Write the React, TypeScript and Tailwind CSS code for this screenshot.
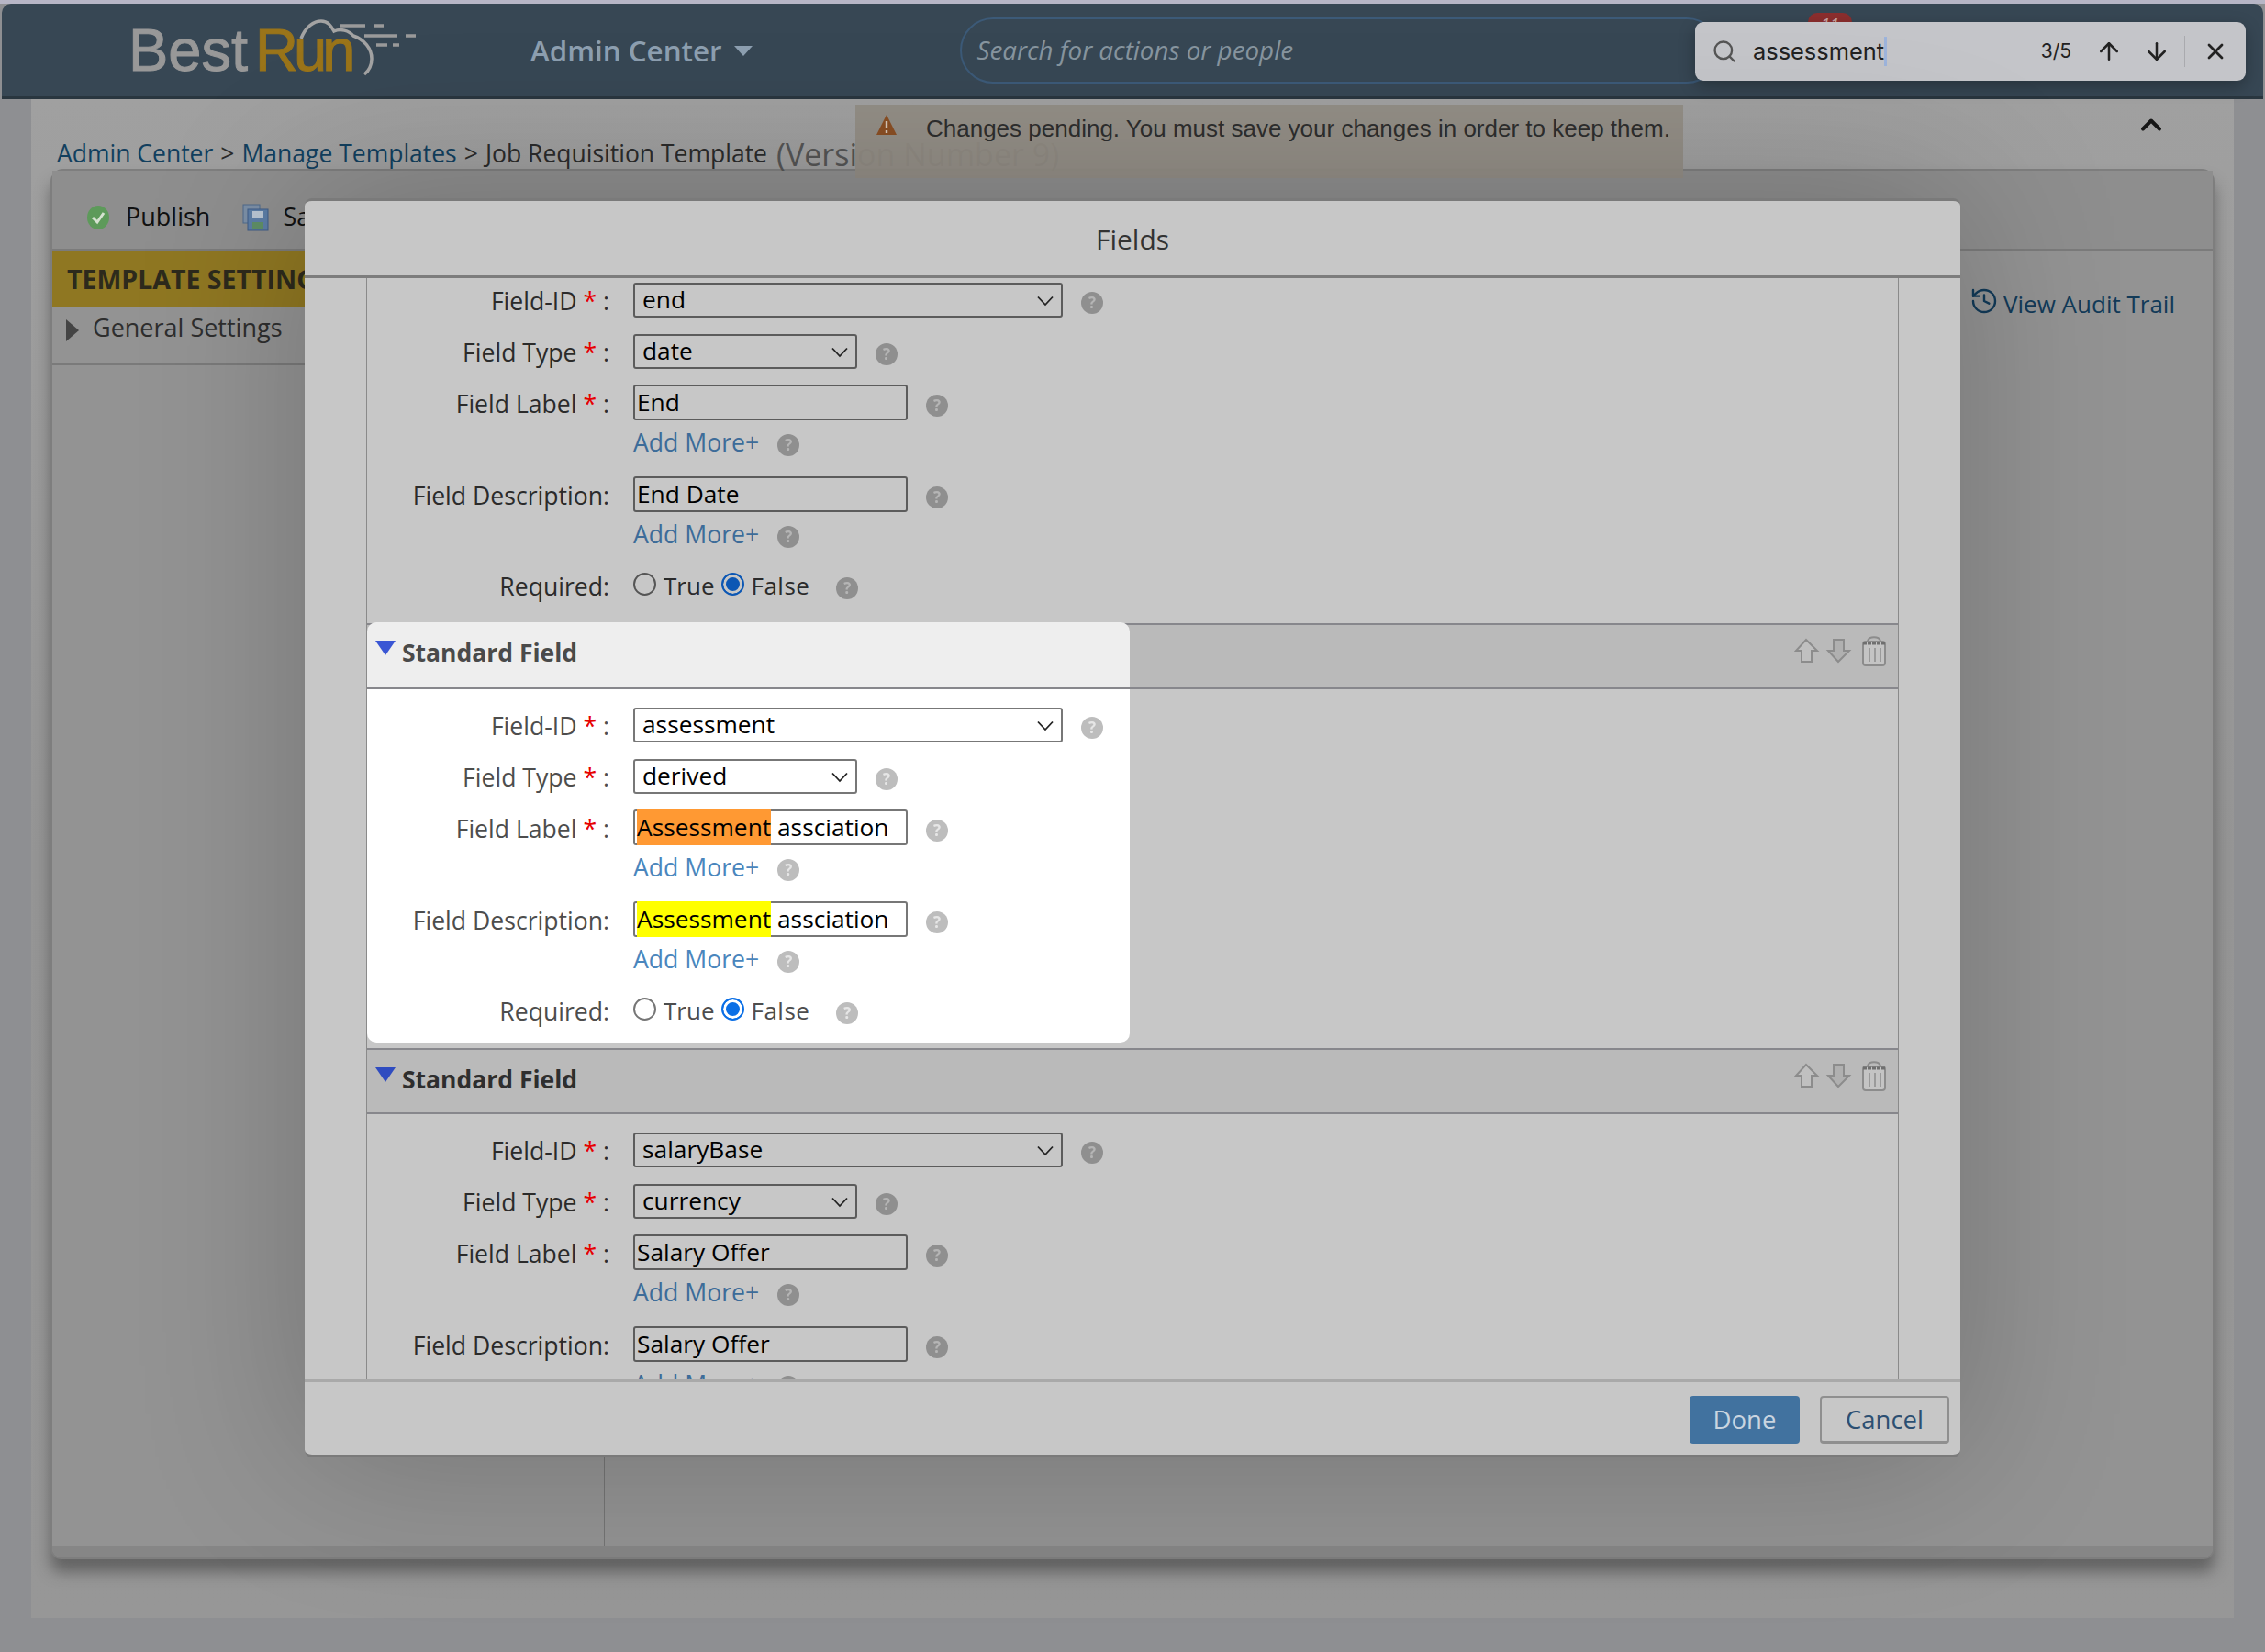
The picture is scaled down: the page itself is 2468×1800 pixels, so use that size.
import type { ReactNode } from 'react';
import { ArrowDown, ArrowUp, ChevronUp, History, Search, X } from 'lucide-react';

type FieldData = {
  id: string;
  idValue: string;
  type: string;
  label: string;
  description: string;
  active?: boolean;
};

const fields: FieldData[] = [
  { id: 'f1', idValue: 'end', type: 'date', label: 'End', description: 'End Date' },
  { id: 'f2', idValue: 'assessment', type: 'derived', label: 'assciation', description: 'assciation', active: true },
  { id: 'f3', idValue: 'salaryBase', type: 'currency', label: 'Salary Offer', description: 'Salary Offer' },
];

function Help({ active, className }: { active?: boolean; className: string }) {
  return (
    <span
      className={`flex h-[24px] w-[24px] shrink-0 translate-y-[3px] items-center justify-center rounded-full text-[17px] font-bold blur-[0.4px] ${
        active ? 'bg-[#bdbdbd] text-[#e6e6e6]' : 'bg-[#8f8f8f] text-[#b5b5b5]'
      } ${className}`}
    >
      ?
    </span>
  );
}

function Label({ text, required, active }: { text: string; required?: boolean; active?: boolean }) {
  return (
    <div className={`w-[264px] shrink-0 translate-y-[2px] text-right text-[26.6px] ${active ? 'text-[#4d4d4d]' : 'text-[#2b2b2b]'}`}>
      {text}
      {required ? (
        <>
          {' '}
          <span className="text-[#e60000]">*</span> :
        </>
      ) : (
        ':'
      )}
    </div>
  );
}

function SelectBox({ value, width, active }: { value: string; width: string; active?: boolean }) {
  return (
    <div
      className={`relative ml-[26px] flex h-[38px] items-center rounded-[3px] border-2 pl-[8px] text-[26.3px] text-black ${width} ${
        active ? 'border-[#777777] bg-white' : 'border-[#5c5c5c]'
      }`}
    >
      {value}
      <svg className="absolute right-[8px] top-[12px]" width="18" height="12" viewBox="0 0 18 12" fill="none">
        <path d="M1 1.5 L9 10 L17 1.5" stroke="#222" strokeWidth="1.8" />
      </svg>
    </div>
  );
}

function TextBox({ active, children }: { active?: boolean; children: ReactNode }) {
  return (
    <div
      className={`ml-[26px] flex h-[39px] w-[299px] items-center rounded-[3px] border-2 pl-[2px] text-[26.3px] whitespace-nowrap text-black ${
        active ? 'border-[#777777] bg-white' : 'border-[#5c5c5c]'
      }`}
    >
      {children}
    </div>
  );
}

function AddMore({ active, className }: { active?: boolean; className: string }) {
  return (
    <div className={`flex h-[30px] items-center pl-[290px] ${className}`}>
      <span className={`translate-y-[1px] text-[26.6px] ${active ? 'text-[#4a86bd]' : 'text-[#3d6c99]'}`}>Add More+</span>
      <Help active={active} className="ml-[20px]" />
    </div>
  );
}

function Radio({ name, checked, active }: { name: string; checked?: boolean; active?: boolean }) {
  return (
    <input
      type="radio"
      name={name}
      defaultChecked={checked}
      className={`m-0 h-[25px] w-[25px] -translate-y-[2px] appearance-none rounded-full border-2 ${
        active
          ? 'border-[#767676] checked:border-[#0b6fe6] checked:bg-[#0b6fe6] checked:shadow-[inset_0_0_0_3px_#ffffff]'
          : 'border-[#555555] checked:border-[#0c57b4] checked:bg-[#0c57b4] checked:shadow-[inset_0_0_0_3px_#c7c7c7]'
      }`}
    />
  );
}

function FieldFields({ field }: { field: FieldData }) {
  const { active } = field;
  const highlighted = (color: string) =>
    active ? (
      <>
        <span className={color}>Assessment</span>&nbsp;{field.label}
      </>
    ) : null;

  return (
    <div className="pt-[20px]">
      <div className="flex h-[38px] items-center">
        <Label text="Field-ID" required active={active} />
        <SelectBox value={field.idValue} width="w-[468px]" active={active} />
        <Help active={active} className="ml-[20px]" />
      </div>
      <div className="mt-[18px] flex h-[38px] items-center">
        <Label text="Field Type" required active={active} />
        <SelectBox value={field.type} width="w-[244px]" active={active} />
        <Help active={active} className="ml-[20px]" />
      </div>
      <div className="mt-[17px] flex h-[39px] items-center">
        <Label text="Field Label" required active={active} />
        <TextBox active={active}>{highlighted('bg-[#ff9933]') ?? field.label}</TextBox>
        <Help active={active} className="ml-[20px]" />
      </div>
      <AddMore active={active} className="mt-[9px]" />
      <div className="mt-[22px] flex h-[39px] items-center">
        <Label text="Field Description" active={active} />
        <TextBox active={active}>{highlighted('bg-[#ffff00]') ?? field.description}</TextBox>
        <Help active={active} className="ml-[20px]" />
      </div>
      <AddMore active={active} className="mt-[9px]" />
      <div className="mt-[28px] flex h-[26px] items-center">
        <Label text="Required" active={active} />
        <div className={`ml-[26px] flex items-center text-[26px] ${active ? 'text-[#4d4d4d]' : 'text-[#2b2b2b]'}`}>
          <Radio name={field.id} active={active} />
          <span className="ml-[8px]">True</span>
          <span className="ml-[7px] flex">
            <Radio name={field.id} checked active={active} />
          </span>
          <span className="ml-[8px] tracking-[0.5px]">False</span>
        </div>
        <Help active={active} className="ml-[29px]" />
      </div>
    </div>
  );
}

function SectionTitle({ active }: { active?: boolean }) {
  return (
    <div className="flex items-center pb-[3px] pl-[8px]">
      <svg className="-translate-y-[6px]" width="24" height="16" viewBox="0 0 24 16">
        <path d="M1 0 H23 L12 16 Z" fill={active ? '#3a56d4' : '#2f4cc0'} />
      </svg>
      <span className={`ml-[6px] text-[26.5px] font-bold ${active ? 'text-[#4a4a4a]' : 'text-[#2e2e2e]'}`}>
        Standard Field
      </span>
    </div>
  );
}

function RowTools() {
  return (
    <svg className="mr-[11px] -translate-y-[6px]" width="102" height="34" viewBox="0 0 102 34" fill="none">
      <path d="M13 5 L25 17 H19 V29 H8 V17 H2 Z" fill="#c0c0c0" stroke="#8c8c8c" strokeWidth="2" />
      <path d="M43 5 H54 V17 H60 L48 29 L37 17 H43 Z" fill="#b0b0b0" stroke="#8c8c8c" strokeWidth="2" />
      <path d="M80 6 C82 1 92 1 94 6" stroke="#8c8c8c" strokeWidth="2" />
      <rect x="75" y="7" width="24" height="26" rx="3" fill="#c4c4c4" stroke="#8c8c8c" strokeWidth="2" />
      <path d="M75 9 H99" stroke="#6f6f6f" strokeWidth="3" strokeDasharray="4 1" />
      <path d="M82 14 V29 M88 14 V29 M94 14 V29" stroke="#9a9a9a" strokeWidth="2" />
    </svg>
  );
}

function FieldSection({ field }: { field: FieldData }) {
  const { active } = field;
  return (
    <section className="border-t-2 border-[#87878c]">
      {active ? (
        <>
          <div className="flex h-[70px] border-b-2 border-[#87878c] bg-[#bababa]">
            <div className="-mt-[3px] flex h-[71px] w-[831px] rounded-t-[10px] bg-[#eeeeee]">
              <SectionTitle active />
            </div>
            <div className="ml-auto flex items-center">
              <RowTools />
            </div>
          </div>
          <div className="h-[391px]">
            <div className="h-[385px] w-[831px] rounded-b-[10px] bg-white">
              <FieldFields field={field} />
            </div>
          </div>
        </>
      ) : (
        <>
          <div className="flex h-[70px] items-center justify-between border-b-2 border-[#87878c] bg-[#bababa]">
            <SectionTitle />
            <RowTools />
          </div>
          <div className="h-[391px]">
            <FieldFields field={field} />
          </div>
        </>
      )}
    </section>
  );
}

function Modal() {
  return (
    <div className="absolute left-[332px] top-[216px] flex h-[1372px] w-[1804px] flex-col rounded-[8px] border-t-[3px] border-b-[3px] border-[#7a7a7a] bg-[#c7c7c7] shadow-[0_0_180px_rgba(0,0,0,0.22)]">
      <div className="flex h-[84px] shrink-0 items-center justify-center border-b-[3px] border-[#7d7d7d] pt-[1px] text-[30px] text-[#333333]">
        Fields
      </div>
      <div className="min-h-0 flex-1 overflow-hidden">
        <div className="mx-[67px] -mt-[87px] border-x border-[#8a8a8a]">
          {fields.map((field) => (
            <FieldSection key={field.id} field={field} />
          ))}
        </div>
      </div>
      <div className="flex h-[83px] shrink-0 items-start justify-end gap-[22px] border-t-[4px] border-[#a9a9a9] pr-[12px] pt-[15px]">
        <button className="h-[52px] w-[120px] rounded-[4px] bg-[#41729f] text-[27.5px] text-[#c9d5e0]">Done</button>
        <button className="h-[52px] w-[141px] rounded-[4px] border-2 border-b-[3px] border-[#8f8f8f] text-[27.5px] text-[#2c4f72]">
          Cancel
        </button>
      </div>
    </div>
  );
}

function BestRunLogo() {
  return (
    <div className="relative ml-[138px] flex h-[70px] w-[320px] items-center font-['Liberation_Sans',sans-serif] text-[65px] leading-none [-webkit-text-stroke:1px]">
      <span className="text-[#989898]">Best</span>
      <span className="ml-[8px] tracking-[-5px] text-[#9a7419]">Run</span>
      <svg className="absolute left-[-140px] top-[-24px]" width="480" height="110" viewBox="0 0 480 110" fill="none">
        <path
          d="M328 46 C333 33 342 27 350 27 C358 27 361 33 364 38 C371 35 380 37 385 43 C397 47 405 57 405 68 C405 75 402 81 397 85"
          stroke="#a3a3a3"
          strokeWidth="3.5"
        />
        <path d="M370 32 H398 M407 32 H418 M397 43 H433 M442 43 H453 M410 53 H422 M428 53 H435" stroke="#9a9a9a" strokeWidth="3.5" />
      </svg>
    </div>
  );
}

function Header() {
  return (
    <header className="mx-[2px] flex h-[104px] shrink-0 items-center rounded-t-[10px] border-b-[3px] border-[#29363f] bg-[#374754]">
      <BestRunLogo />
      <div className="ml-[118px] flex translate-y-[1px] items-center text-[31.3px] font-semibold text-[#8d9fb0]">
        Admin Center
        <svg className="ml-[14px]" width="20" height="11" viewBox="0 0 20 11">
          <path d="M0 0 H20 L10 11 Z" fill="#8d9fb0" />
        </svg>
      </div>
      <div className="ml-[226px] flex h-[72px] w-[828px] items-center rounded-[36px] border-2 border-[#3c5a78] pl-[16px] text-[27.8px] italic text-[#87959f]">
        Search for actions or people
      </div>
    </header>
  );
}

function FindBar() {
  return (
    <>
      <span className="absolute left-[1970px] top-[14px] h-[10px] w-[48px] overflow-hidden rounded-t-full bg-[#8c2e2e] text-center text-[18px] leading-[24px] italic text-[#c9a5a5]">
        11
      </span>
      <div className="absolute left-[1847px] top-[24px] flex h-[64px] w-[600px] items-center rounded-[9px] bg-[#c4c5c9] font-['Inter',sans-serif] text-[#222222] shadow-[0_6px_18px_rgba(0,0,0,0.28)]">
        <Search className="ml-[18px] h-[28px] w-[28px] text-[#555555]" strokeWidth={2} />
        <span className="ml-[17px] text-[25.4px]">assessment</span>
        <span className="h-[32px] w-[3px] bg-[#9db4dc]" />
        <span className="ml-auto text-[21px]">3/5</span>
        <ArrowUp className="ml-[26px] h-[30px] w-[30px]" strokeWidth={2} />
        <ArrowDown className="ml-[22px] h-[30px] w-[30px]" strokeWidth={2} />
        <span className="ml-[15px] h-[34px] w-px bg-[#a9aaae]" />
        <X className="mx-[19px] h-[28px] w-[28px]" strokeWidth={2.4} />
      </div>
    </>
  );
}

function Panel() {
  return (
    <div className="mx-[21px] -mt-[4px] flex h-[1515px] flex-col rounded-t-[14px] rounded-b-[12px] border-2 border-[#7e7e7e] bg-[#939393] shadow-[0_14px_16px_rgba(50,50,50,0.5)]">
      <div className="flex h-[88px] shrink-0 items-center border-b-[3px] border-[#7b7b7b] bg-[#8e8e8e] pl-[37px] pt-[16px] text-[27px] text-[#111111]">
        <svg width="26" height="30" viewBox="0 0 26 30">
          <ellipse cx="13" cy="15" rx="12" ry="13" fill="#5d9a5a" />
          <path d="M7 15 L12 20 L19 10" stroke="#d5e2d0" strokeWidth="3" fill="none" />
        </svg>
        <span className="ml-[17px]">Publish</span>
        <svg className="ml-[35px]" width="30" height="30" viewBox="0 0 30 30">
          <rect x="1" y="1" width="18" height="20" fill="#7c8fa6" stroke="#4f6a8c" />
          <rect x="6" y="6" width="22" height="23" fill="#5c7da6" stroke="#3f5d85" />
          <rect x="11" y="8" width="12" height="7" fill="#b9c5d3" />
          <rect x="11" y="20" width="12" height="8" fill="#5f8f66" />
        </svg>
        <span className="ml-[14px]">Save</span>
      </div>
      <div className="flex min-h-0 flex-1">
        <aside className="w-[602px] shrink-0 border-r border-[#747474]">
          <div className="flex h-[61px] items-center bg-[#8f7722] pl-[16px] text-[28.5px] font-bold whitespace-nowrap text-[#2d2a1c]">
            TEMPLATE SETTINGS
          </div>
          <div className="flex h-[63px] items-center border-b-2 border-[#7a7a7a] pl-[15px] text-[27px] text-[#2e2e2e]">
            <span className="h-0 w-0 -translate-y-[6px] border-y-[12px] border-l-[14px] border-y-transparent border-l-[#444444]" />
            <span className="ml-[15px] -translate-y-[8px]">General Settings</span>
          </div>
        </aside>
        <div className="flex flex-1 justify-end pr-[41px] pt-[39px]">
          <div className="flex h-[36px] items-center text-[26px] text-[#123a58]">
            <History className="-translate-y-[3px] h-[32px] w-[32px]" strokeWidth={1.8} />
            <span className="ml-[5px]">View Audit Trail</span>
          </div>
        </div>
      </div>
      <div className="h-[12px] shrink-0 rounded-b-[10px] bg-[#868686]" />
    </div>
  );
}

export default function App() {
  return (
    <div className="relative flex h-[1800px] w-[2468px] flex-col overflow-hidden bg-[#8e8f92] font-['Open_Sans',sans-serif]">
      <div className="h-[4px] shrink-0 bg-[#b7b6c6]" />
      <Header />
      <main className="mx-[34px] h-[1655px] bg-gradient-to-b from-[#a0a0a0] via-[#959595] to-[#979797]">
        <div className="flex h-[80px] items-end pl-[28px] text-[26.5px] whitespace-nowrap text-[#2b2b2b]">
          <a className="text-[#123f5e]">Admin Center</a>
          <span className="mx-[8px]">&gt;</span>
          <a className="text-[#123f5e]">Manage Templates</a>
          <span className="mx-[8px]">&gt;</span>
          <span>Job Requisition Template</span>
          <span className="ml-[10px] text-[34px] leading-[40px] text-[#555555]">(Version Number 9)</span>
        </div>
        <Panel />
      </main>
      {/* pending banner sits on top of the version text */}
      <div className="absolute left-[932px] top-[114px] flex h-[80px] w-[902px] items-start bg-[#928d85]/95 pl-[22px] pt-[7px] font-['Liberation_Sans',sans-serif] text-[26px] text-[#2e2e2e]">
        <svg className="mt-[3px]" width="24" height="24" viewBox="0 0 24 24">
          <path d="M12 1 L23 23 H1 Z" fill="#8a4f24" />
          <path d="M12 8 V16 M12 18 V21" stroke="#d8c8b8" strokeWidth="2.4" />
        </svg>
        <span className="ml-[31px]">Changes pending. You must save your changes in order to keep them.</span>
      </div>
      <ChevronUp className="absolute left-[2326px] top-[118px] h-[36px] w-[36px] text-[#161616]" strokeWidth={2.6} />
      <FindBar />
      <Modal />
    </div>
  );
}
